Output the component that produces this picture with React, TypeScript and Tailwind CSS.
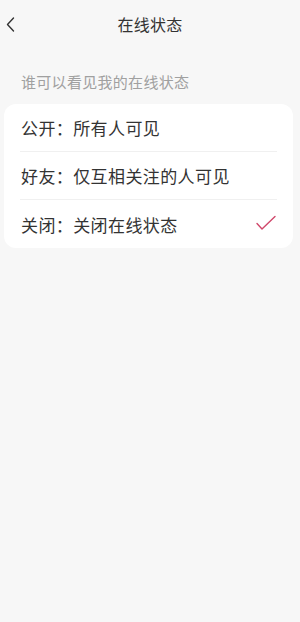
import React, { useState } from 'react';

const options = [
  { key: 'public', label: '公开：所有人可见' },
  { key: 'friends', label: '好友：仅互相关注的人可见' },
  { key: 'off', label: '关闭：关闭在线状态' },
];

export default function App() {
  const [selected, setSelected] = useState('off');

  return (
    <div
      className="min-h-[622px] bg-[#f7f7f7] text-[#333]"
      style={{ fontFamily: '"Noto Sans CJK SC", "Noto Sans", sans-serif' }}
    >
      {/* Header */}
      <header className="relative h-12 flex items-center justify-center">
        <button className="absolute left-[4px] top-[15px] w-[12px] h-[18px] flex items-center justify-center">
          <svg width="9" height="15" viewBox="0 0 9 15" fill="none">
            <path d="M7.5 1L1.5 7.5L7.5 14" stroke="#333" strokeWidth="1.4" strokeLinecap="round" strokeLinejoin="round" />
          </svg>
        </button>
        <h1 className="text-[16px] font-normal leading-none tracking-[0.3px]">在线状态</h1>
      </header>

      <p className="pl-[21px] pt-[23px] text-[15px] leading-[22px] tracking-[0.3px] text-[#a0a0a0]">谁可以看见我的在线状态</p>

      <div className="ml-[4px] mr-[7px] mt-[11px] bg-white rounded-[12px] px-[16px]">
        {options.map((o, i) => (
          <div
            key={o.key}
            onClick={() => setSelected(o.key)}
            className={`h-[48px] flex items-center justify-between ${i < options.length - 1 ? 'border-b border-[#f0f0f0]' : ''}`}
          >
            <span className="text-[17px] leading-none pl-[1px] tracking-[0.4px] text-[#333]">{o.label}</span>
            {selected === o.key && (
              <svg width="20" height="16" viewBox="0 0 20 16" fill="none" className="mr-[1px] mt-[-2px]">
                <path d="M1 8.5L6 14L19 1.5" stroke="#d0486b" strokeWidth="1.4" strokeLinecap="round" strokeLinejoin="round" />
              </svg>
            )}
          </div>
        ))}
      </div>
    </div>
  );
}
